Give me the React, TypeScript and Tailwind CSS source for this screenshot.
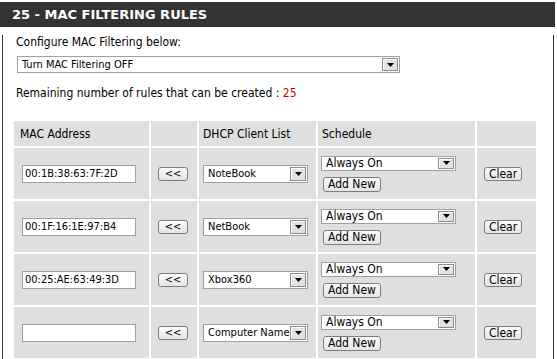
import React from "react";

const TF = "font-['DejaVu_Sans_Condensed','DejaVu_Sans',sans-serif]";

function Arrow() {
  return (
    <span className="my-[1px] mr-[1px] flex w-[16px] items-center justify-center border border-[#8a8a8a] bg-[#e2e2e2] shadow-[inset_1px_1px_0_#ffffff]">
      <svg width="7" height="4" viewBox="0 0 7 4">
        <path d="M0 0H7L3.5 4Z" fill="#000" />
      </svg>
    </span>
  );
}

function FakeSelect({ className, text, textClass }: { className: string; text: string; textClass: string }) {
  return (
    <div className={`flex items-stretch border border-[#a0a0a0] bg-white ${className}`}>
      <span className={`flex flex-1 items-center overflow-hidden whitespace-nowrap pl-[4px] leading-none text-black ${textClass}`}>{text}</span>
      <Arrow />
    </div>
  );
}

function Btn({ className, children }: { className: string; children: React.ReactNode }) {
  return (
    <div
      className={`flex items-center justify-center rounded-[3px] border border-[#7c7c7c] bg-[linear-gradient(#fcfcfc,#e4e4e4)] leading-none text-black ${className}`}
    >
      {children}
    </div>
  );
}

const rows = [
  { mac: "00:1B:38:63:7F:2D", dev: "NoteBook" },
  { mac: "00:1F:16:1E:97:B4", dev: "NetBook" },
  { mac: "00:25:AE:63:49:3D", dev: "Xbox360" },
  { mac: "", dev: "Computer Name" },
];

export default function App() {
  return (
    <div className={`h-[359px] w-[557px] overflow-hidden bg-white pt-[2px] ${TF}`}>
      <div className="flex h-[25px] w-[555px] items-center bg-[#333333] pl-[12px] font-['DejaVu_Sans',sans-serif] text-[13px] font-bold text-white">
        25 - MAC FILTERING RULES
      </div>
      <div className="ml-[2px] h-[332px] w-[552px] border-x border-[#333333] pl-[11px] text-[12px] text-black">
        <div className="mt-[8px] pl-[2px] leading-[15px]">Configure MAC Filtering below:</div>
        <FakeSelect className="ml-[3px] mt-[6px] h-[17px] w-[383px]" textClass="text-[11px]" text="Turn MAC Filtering OFF" />
        <div className="mt-[13px] pl-[2px] leading-[15px]">
          Remaining number of rules that can be created : <span className="text-[#cc0000]">25</span>
        </div>
        <div className="mt-[20px] grid grid-cols-[135px_46px_117px_157px_59px] grid-rows-[25px_51px_51px_51px_51px] gap-[2px]">
          <div className="flex items-center bg-[#dfdfdf] pl-[6px]">MAC Address</div>
          <div className="bg-[#dfdfdf]" />
          <div className="flex items-center bg-[#dfdfdf] pl-[4px]">DHCP Client List</div>
          <div className="flex items-center bg-[#dfdfdf] pl-[4px]">Schedule</div>
          <div className="bg-[#dfdfdf]" />
          {rows.map((r, i) => (
            <React.Fragment key={i}>
              <div className="flex items-center bg-[#dfdfdf] pl-[8px]">
                <div className="flex h-[18px] w-[114px] items-center border border-[#a0a0a0] bg-white pl-[2px] text-[11px] leading-none">
                  {r.mac}
                </div>
              </div>
              <div className="flex items-center bg-[#dfdfdf] pl-[7px]">
                <Btn className="h-[14px] w-[30px] text-[11px]">&lt;&lt;</Btn>
              </div>
              <div className="flex items-center bg-[#dfdfdf] pl-[4px]">
                <FakeSelect className="h-[18px] w-[105px]" textClass="text-[11px]" text={r.dev} />
              </div>
              <div className="flex flex-col justify-center gap-[6px] bg-[#dfdfdf] pl-[3px]">
                <FakeSelect className="h-[15px] w-[135px]" textClass="text-[12px]" text="Always On" />
                <Btn className="ml-[2px] h-[15px] w-[58px] text-[12px]">Add New</Btn>
              </div>
              <div className="flex items-center bg-[#dfdfdf] pl-[7px]">
                <Btn className="h-[14px] w-[38px] text-[12px]">Clear</Btn>
              </div>
            </React.Fragment>
          ))}
        </div>
      </div>
    </div>
  );
}
